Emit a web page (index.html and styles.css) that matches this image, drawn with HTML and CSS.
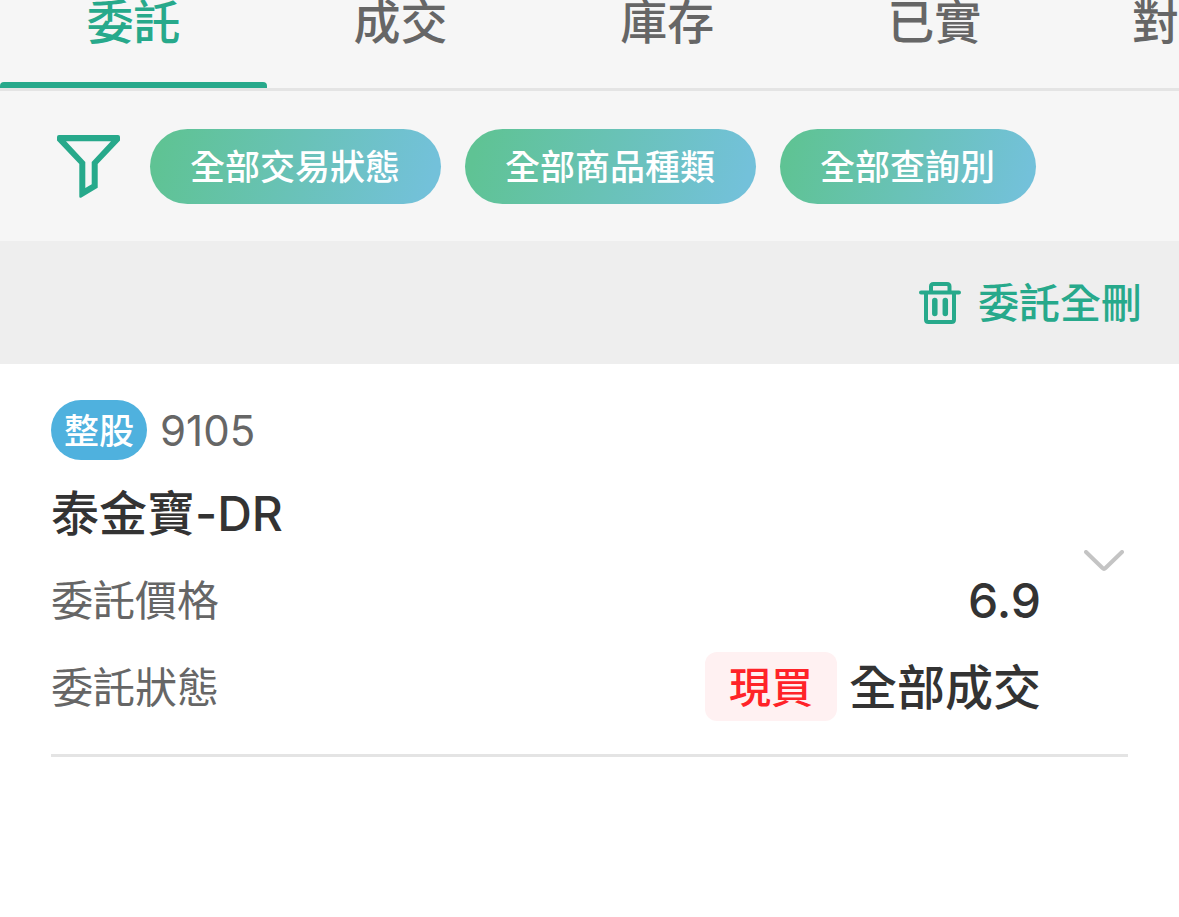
FILE: index.html
```html
<!DOCTYPE html>
<html lang="zh-Hant">
<head>
<meta charset="utf-8">
<meta name="viewport" content="width=device-width, initial-scale=1">
<title>委託</title>
<link rel="stylesheet" href="styles.css">
</head>
<body>
<nav class="tabs">
  <a class="tab tab-active" href="#orders" aria-current="page">委託</a>
  <a class="tab" href="#deals">成交</a>
  <a class="tab" href="#holdings">庫存</a>
  <a class="tab" href="#realized">已實</a>
  <a class="tab tab-last" href="#statement">對</a>
</nav>

<section class="filters">
  <button class="icon-button" type="button" aria-label="篩選">
    <svg width="63" height="63" viewBox="0 0 63 63" aria-hidden="true">
      <path fill="currentColor" fill-rule="evenodd" d="M0 2Q0 0 2 0H61Q63 0 63 2V5.500L40.700 29V52.700L24 62.700Q22.300 63.200 22.300 61.500V29L0 5.500ZM9 6.300L28.300 27V53L34.700 49.300V27L54 6.300Z"/>
    </svg>
  </button>
  <div class="chips">
    <button class="chip" type="button">全部交易狀態</button>
    <button class="chip" type="button">全部商品種類</button>
    <button class="chip" type="button">全部查詢別</button>
  </div>
</section>

<section class="actions">
  <button class="delete-all" type="button">
    <svg width="42" height="42" viewBox="0 0 42 42" fill="none" stroke="currentColor" stroke-width="4" stroke-linecap="round" stroke-linejoin="round" aria-hidden="true">
      <path d="M2 10.500H40M7 11V37.500Q7 40 9.500 40H32.500Q35 40 35 37.500V11M12 10V4.500Q12 2 14.500 2H28Q30.500 2 30.500 4.500V10"/>
      <path stroke-width="5.500" d="M15.800 18.500V31.500M26.300 18.500V31.500"/>
    </svg>
    <span>委託全刪</span>
  </button>
</section>

<main class="orders">
  <article class="order">
    <div class="order-body">
      <div class="order-head">
        <span class="lot-badge">整股</span>
        <span class="code">9105</span>
      </div>
      <h2 class="name">泰金寶-DR</h2>
      <div class="row">
        <span class="label">委託價格</span>
        <span class="value">6.9</span>
      </div>
      <div class="row">
        <span class="label">委託狀態</span>
        <span class="value"><span class="side-tag">現買</span><span>全部成交</span></span>
      </div>
    </div>
    <button class="expand" type="button" aria-label="展開">
      <svg width="40" height="21" viewBox="0 0 40 21" fill="none" stroke="currentColor" stroke-width="4" stroke-linecap="round" stroke-linejoin="round" aria-hidden="true">
        <path d="M2 2L18.500 18Q20 19.500 21.500 18L38 2"/>
      </svg>
    </button>
  </article>
</main>
</body>
</html>
```

FILE: styles.css
```css
:root {
  --green: #27a98b;
  --ink: #333333;
  --muted: #666666;
  --line: #e4e4e4;
}

* {
  box-sizing: border-box;
}

body {
  margin: 0;
  background: #ffffff;
  color: var(--ink);
  font-family: Inter, "Noto Sans CJK TC", sans-serif;
}

button {
  margin: 0;
  padding: 0;
  border: 0;
  background: none;
  color: inherit;
  font: inherit;
  cursor: pointer;
}

svg {
  display: block;
}

.tabs {
  display: grid;
  grid-template-columns: repeat(4, 12fr) 5fr;
  border-bottom: 3px solid var(--line);
  background: #f6f6f6;
}

.tab {
  padding-bottom: 44px;
  color: var(--muted);
  font-size: 47px;
  font-weight: 500;
  line-height: 44px;
  text-align: center;
  text-decoration: none;
  white-space: nowrap;
}

.tab-active {
  position: relative;
  color: var(--green);
}

.tab-active::after {
  content: "";
  position: absolute;
  right: 0;
  bottom: 0;
  left: 0;
  height: 6px;
  border-radius: 4px 4px 0 0;
  background: var(--green);
}

.tab-last {
  text-align: right;
}

.filters {
  display: flex;
  align-items: center;
  gap: 30px;
  padding: 38px 57px 37px;
  background: #f6f6f6;
}

.icon-button {
  flex: none;
  color: var(--green);
}

.chips {
  display: flex;
  gap: 24px;
}

.chip {
  padding: 2px 41px 0 40px;
  border-radius: 38px;
  background: linear-gradient(105deg, #5fc394 5%, #73c1da 95%);
  color: #ffffff;
  font-size: 35px;
  font-weight: 500;
  line-height: 73px;
  white-space: nowrap;
}

.actions {
  display: flex;
  justify-content: flex-end;
  padding: 30px 37px;
  background: #eeeeee;
}

.delete-all {
  display: flex;
  align-items: center;
  gap: 17px;
  color: var(--green);
  font-size: 41px;
  font-weight: 500;
  line-height: 61px;
}

.delete-all span {
  padding-top: 2px;
}

.orders {
  padding: 0 51px;
}

.order {
  display: flex;
  align-items: center;
  gap: 43px;
  padding: 36px 4px 33px 0;
  border-bottom: 3px solid var(--line);
}

.order-body {
  display: flex;
  flex: 1;
  flex-direction: column;
  gap: 18px;
}

.order-head {
  display: flex;
  align-items: center;
  gap: 13px;
}

.lot-badge {
  padding: 2px 13px 0;
  border-radius: 30px;
  background: #4fb1de;
  color: #ffffff;
  font-size: 35px;
  font-weight: 500;
  line-height: 58px;
}

.code {
  padding-top: 2px;
  color: var(--muted);
  font-size: 42px;
  line-height: 58px;
}

.name {
  margin: 0;
  padding-top: 2px;
  font-size: 48px;
  font-weight: 500;
  line-height: 67px;
}

.row {
  display: flex;
  align-items: center;
  justify-content: space-between;
  line-height: 67px;
}

.label,
.value,
.side-tag {
  padding-top: 2px;
}

.label {
  color: var(--muted);
  font-size: 42px;
}

.value {
  display: flex;
  align-items: center;
  gap: 12px;
  padding-top: 0;
  font-size: 48px;
  font-weight: 500;
}

.value > span,
.value:not(:has(span)) {
  padding-top: 2px;
}

.value > .side-tag {
  padding: 2px 24px 0;
  border-radius: 12px;
  background: #fff1f2;
  color: #ff2328;
  font-size: 42px;
}

.expand {
  flex: none;
  color: #c4c4c4;
}
```
